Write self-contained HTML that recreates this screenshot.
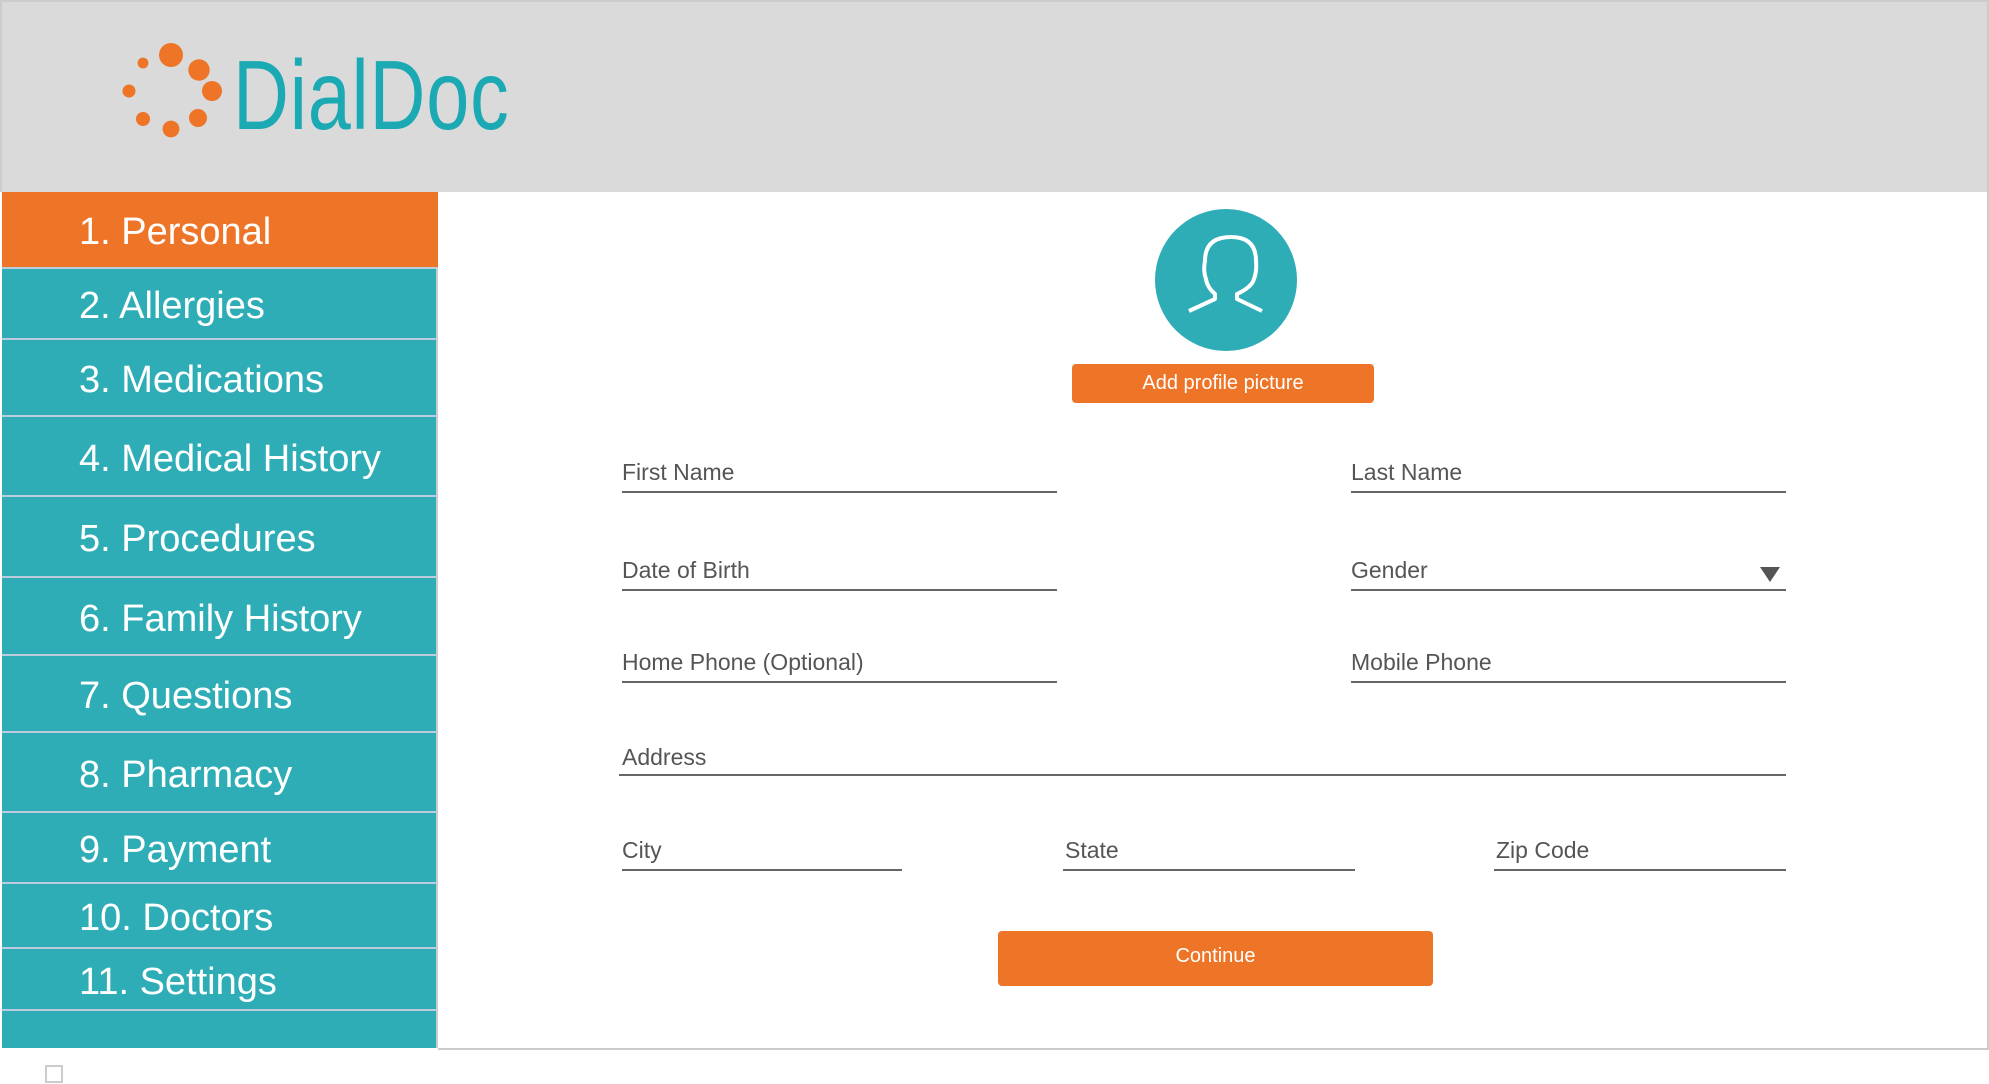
<!DOCTYPE html>
<html><head><meta charset="utf-8"><style>
*{margin:0;padding:0;box-sizing:border-box}
body{width:1989px;height:1084px;background:#fff;position:relative;overflow:hidden;font-family:"Liberation Sans",sans-serif}
.hdr{position:absolute;left:0;top:0;width:1989px;height:192px;background:#dadada;border:2px solid #ccc;border-bottom:none}
.logo{position:absolute;left:233px;top:46px;font-size:98px;line-height:1;color:#1ba9b3;transform:scaleX(0.79);transform-origin:left top;letter-spacing:1px}
.side{position:absolute;left:2px;top:192px;width:436px;height:856px;background:#2eadb6;border-right:2px solid #ccc}
.item{position:absolute;left:0;width:436px;color:#fff;font-size:38px;padding-left:77px;padding-top:6px;display:flex;align-items:center;border-bottom:2px solid #bcd}
.main{position:absolute;left:438px;top:192px;width:1551px;height:858px;border-right:2px solid #ccc;border-bottom:2px solid #ccc}
.lbl{position:absolute;font-size:23px;color:#555}
.ln{position:absolute;height:2px;background:#666}
.btn{position:absolute;background:#ee7527;color:#fff;border-radius:4px;display:flex;align-items:center;justify-content:center;font-size:20px}
</style></head><body>
<div class="hdr"></div>
<svg style="position:absolute;left:0;top:0" width="240" height="190">
<g fill="#ee7527">
<circle cx="171" cy="55" r="12"/><circle cx="199" cy="70" r="10.7"/><circle cx="212" cy="91" r="10"/><circle cx="198" cy="118" r="9"/><circle cx="171" cy="129" r="8.4"/><circle cx="143" cy="119" r="7"/><circle cx="129" cy="91" r="6.5"/><circle cx="143" cy="63" r="5.4"/>
</g></svg>
<div class="logo">DialDoc</div>
<div class="side">
<div class="item" style="top:0;height:77px;background:#ee7527">1. Personal</div>
<div class="item" style="top:77px;height:71px">2. Allergies</div>
<div class="item" style="top:148px;height:77px">3. Medications</div>
<div class="item" style="top:225px;height:80px">4. Medical History</div>
<div class="item" style="top:305px;height:81px">5. Procedures</div>
<div class="item" style="top:386px;height:78px">6. Family History</div>
<div class="item" style="top:464px;height:77px">7. Questions</div>
<div class="item" style="top:541px;height:80px">8. Pharmacy</div>
<div class="item" style="top:621px;height:71px">9. Payment</div>
<div class="item" style="top:692px;height:65px">10. Doctors</div>
<div class="item" style="top:757px;height:62px">11. Settings</div>
</div>
<div class="main"></div>
<div style="position:absolute;left:45px;top:1065px;width:18px;height:18px;border:2px solid #ccc"></div>
<svg style="position:absolute;left:1155px;top:209px" width="142" height="142">
<circle cx="71" cy="71" r="71" fill="#2eadb6"/>
<path d="M34 102 L60 90 L60 85 Q52 78 51 70 Q48 62 50 52 Q50 28 76 28 Q101 28 101 52 Q102 62 99 70 Q97 78 82 85 L82 90 L107 102" fill="none" stroke="#fff" stroke-width="4" stroke-linejoin="round"/>
</svg>
<div class="btn" style="left:1072px;top:364px;width:302px;height:39px">Add profile picture</div>
<div class="lbl" style="left:622px;top:459px">First Name</div><div class="ln" style="left:622px;top:491px;width:435px"></div>
<div class="lbl" style="left:1351px;top:459px">Last Name</div><div class="ln" style="left:1351px;top:491px;width:435px"></div>
<div class="lbl" style="left:622px;top:557px">Date of Birth</div><div class="ln" style="left:622px;top:589px;width:435px"></div>
<div class="lbl" style="left:1351px;top:557px">Gender</div><div class="ln" style="left:1351px;top:589px;width:435px"></div>
<div style="position:absolute;left:1760px;top:567px;width:0;height:0;border-left:10px solid transparent;border-right:10px solid transparent;border-top:15px solid #555"></div>
<div class="lbl" style="left:622px;top:649px">Home Phone (Optional)</div><div class="ln" style="left:622px;top:681px;width:435px"></div>
<div class="lbl" style="left:1351px;top:649px">Mobile Phone</div><div class="ln" style="left:1351px;top:681px;width:435px"></div>
<div class="lbl" style="left:622px;top:744px">Address</div><div class="ln" style="left:619px;top:774px;width:1167px"></div>
<div class="lbl" style="left:622px;top:837px">City</div><div class="ln" style="left:622px;top:869px;width:280px"></div>
<div class="lbl" style="left:1065px;top:837px">State</div><div class="ln" style="left:1063px;top:869px;width:292px"></div>
<div class="lbl" style="left:1496px;top:837px">Zip Code</div><div class="ln" style="left:1494px;top:869px;width:292px"></div>
<div class="btn" style="left:998px;top:931px;width:435px;height:55px;padding-bottom:4px">Continue</div>
</body></html>
